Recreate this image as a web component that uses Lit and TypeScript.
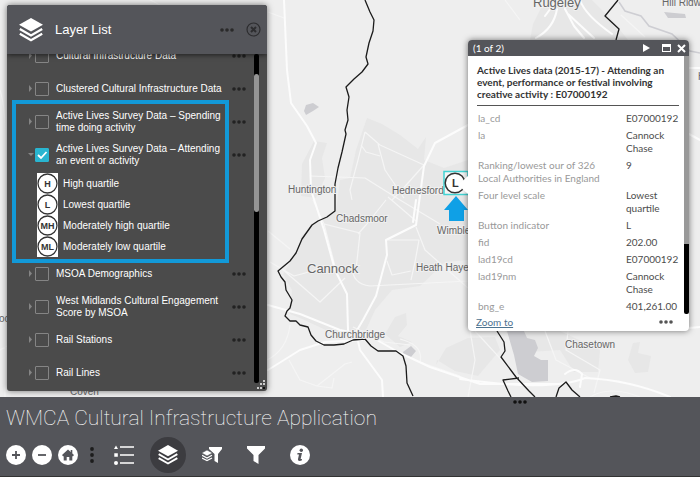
import { LitElement, html, svg, css } from "lit";
import { customElement, property } from "lit/decorators.js";

const dots = () => svg`<svg class="dots" viewBox="0 0 14 4" width="14" height="4" fill="currentColor">
  <circle cx="2" cy="2" r="1.8"/><circle cx="7" cy="2" r="1.8"/><circle cx="12" cy="2" r="1.8"/></svg>`;

const stack = (size: number) => html`<svg viewBox="0 0 24 24" width=${size} height=${size}>
  <path fill="#fff" d="M12 0 24 6.8 12 13.6 0 6.8Z"/>
  <path fill="none" stroke="#fff" stroke-width="2.3" d="M.8 11 12 17.4 23.2 11M.8 15.8 12 22.2 23.2 15.8"/></svg>`;

@customElement("map-view")
export class MapView extends LitElement {
  static styles = css`
    :host { display: block; position: absolute; inset: 0; background: #eeeeee; }
    svg { display: block; width: 100%; height: 100%; }
    text { font-family: "Liberation Sans", Arial, sans-serif; fill: #666; font-size: 10px;
      paint-order: stroke; stroke: #f0f0f0; stroke-width: 2px; }
    .town { font-size: 13px; }
    .tag { font-size: 11px; font-weight: bold; fill: #333; stroke: none; }
    .urban { fill: #e7e7e7; }
    .water { fill: #cdcdd1; }
    .road { fill: none; stroke: #fcfcfc; stroke-width: 2; stroke-linejoin: round; stroke-linecap: round; }
    .lane { fill: none; stroke: #f5f5f5; stroke-width: 1.2; stroke-linejoin: round; }
    .edge { fill: none; stroke: #1b1b1b; stroke-width: 1.3; stroke-linejoin: round; }
  `;
  render() {
    return html`<svg viewBox="0 0 700 397" preserveAspectRatio="xMidYMid slice" role="img" aria-label="Map">
      <path class="urban" d="M367 118 382 124 400 135 418 149 426 137 424 160 444 168 468 160 468 260 445 262 420 286 392 290 375 310 366 330 330 332 300 318 290 314 292 290 283 274 296 254 301 237 313 223 336 210 340 180 350 178 356 150Z"/>
      <path class="urban" d="M314 141 327 143 322 158 325 178 316 198 301 196 302 164ZM533 24 545 0H592L612 20 628 40H530ZM436 365 446 348 468 338 495 337 500 350 478 376 455 371 437 360ZM505 331H560L600 350 598 372 574 372 560 350 530 352ZM395 317 406 313 407 325 398 336 412 342 400 347 385 334ZM633 343 640 342 638 353 651 356 648 372 635 373 628 360Z"/>
      <path class="water" d="M304 111 306 105 313 103 319 107 313 111 306 115ZM403 352 411 346 416 351 411 357 404 356ZM507 331H524L527 338 535 340 538 348 534 356 541 360H548V381L532 382 518 374 514 355ZM664 12 685 14 686 18 668 18Z"/>
      <path class="lane" d="M0 90Q5 105 5 130V397M0 350 7 346M150 0 160 5M268 12 284 18M310 176 365 178 400 200 440 224M365 132 358 160 350 190 352 200M365 132 380 145 424 165M378 144 385 170 404 198M424 165 400 192 392 200M361 145 366 152 380 156M313 200 324 224 360 233 356 270M324 224 337 274M268 231 290 249M270 262 294 276 335 265M281 268 320 302 345 278M352 266Q352 284 370 286L468 281M386 200 366 225 358 234M388 197 416 221M388 240 419 240 415 262 411 280M387 261 392 275 411 271M416 227 425 250 468 288M289 360 300 380 317 386 345 364 352 362M317 386 332 388 334 378M267 360Q287 350 290 325M353 327 384 342 410 345M400 339Q424 345 420 362L460 376M470 330 475 360 468 397M475 331 520 380M545 331 556 360 590 378M568 331 566 350 600 370 594 393M590 397Q610 385 640 397M621 15 645 37M505 0 520 20"/>
      <path class="road" d="M284 0 287 70 291 103 307 126 316 143 310 160 311 190 324 230 335 270 347 294 348 330M468 125 435 143 424 166 416 225 386 240 387 255 376 296 363 320 356 332 360 350 382 380 383 397M416 200 413 222M268 305 300 314 340 330 370 336 398 352 430 367 480 384H560M268 370 300 350 325 342 362 340M545 16 557 0M536 38Q554 28 557 9M565 9 574 26 584 38M568 14 594 38M580 0Q585 15 612 34M460 379Q550 392 585 378Q630 380 670 397M565 374Q575 366 582 374L580 387M689 68 700 68M689 134 700 140M689 328 700 327"/>
      <path fill="none" stroke="#ceced3" stroke-width="1.5" d="M619 2 625 11 641 16 649 26 672 34 690 51 700 53"/>
      <path class="edge" d="M365 0 370 12 374 20 373 31 369 43 366 57 368 64 362 72 354 79 346 87 349 97 347 110 348 120 345 130 346 134 342 152 338 168 335 184 335 211 327 217 318 221 312 225 302 239 296 253 290 261 278 271 281 277 285 282 286 290 292 300 290 308 287 311 285 316 290 321 296 321 300 325 308 327 311 335 316 341 324 345 334 345 344 344 353 340 365 339 371 346 378 351 396 351 403 356 406 366 407 383 413 396M618 0 605 16 619 29 616 40M497 331 504 342 505 351 501 357 516 377 529 391 535 397M519 378 503 380 508 391 511 397M556 397 559 388 566 382 572 390 580 397M610 397 616 396 620 397"/>
      <text class="town" x="533" y="7">Rugeley</text>
      <text x="662" y="6">Hill Ridware</text>
      <text x="698" y="80">H</text>
      <text x="288" y="193">Huntington</text>
      <text x="392" y="194">Hednesford</text>
      <text x="336" y="222">Chadsmoor</text>
      <text class="town" x="307" y="273">Cannock</text>
      <text x="437" y="234">Wimble</text>
      <text x="416" y="271">Heath Haye</text>
      <text x="325" y="338">Churchbridge</text>
      <text x="565" y="348">Chasetown</text>
      <text x="70" y="395">Coven</text>
      <text x="-1" y="322">oc</text>
      <rect x="444" y="171.500" width="24" height="23" fill="#f6f6f6" stroke="#42d3d3" stroke-width="1.500"/>
      <circle cx="455" cy="183" r="9.800" fill="#fff" stroke="#333" stroke-width="1.500"/>
      <text class="tag" x="452" y="187">L</text>
      <path fill="#0fa0e6" d="M456 196 468 210H464V221H449V210H444Z"/>
    </svg>`;
  }
}

@customElement("layer-row")
export class LayerRow extends LitElement {
  @property() label = "";
  @property({ type: Boolean }) on = false;
  static styles = css`
    :host { display: flex; align-items: center; height: 33px; flex: none; padding: 0 21px; }
    .twist { width: 7px; height: 12px; padding: 0; border: 0; background: none; display: flex; align-items: center; }
    label { flex: 1; display: flex; align-items: center; gap: 7px; font-size: 10px; line-height: 12px; color: #fff; }
    input { appearance: none; box-sizing: border-box; flex: none; width: 14px; height: 14px; margin: 0; border: 1px solid #858585; border-radius: 1px; }
    input:checked { border-color: #29b5d0; background: #29b5d0; }
    .box { display: grid; flex: none; }
    .box > * { grid-area: 1 / 1; }
    .tick { pointer-events: none; }
    .more { border: 0; background: none; padding: 0; color: #222; display: flex; width: 14px; }
    .name { width: 168px; }
  `;
  render() {
    return html`<button class="twist" aria-label="Expand">
        <svg width="7" height="7" viewBox="0 0 7 7"><path fill="#858585" d=${this.on ? "M0 2H6L3 5Z" : "M1 0 4 3.500 1 7Z"}/></svg>
      </button>
      <label><span class="box"><input type="checkbox" .checked=${this.on}>
        ${this.on ? html`<svg class="tick" width="14" height="14" viewBox="0 0 14 14"><path fill="none" stroke="#fff" stroke-width="1.800" d="M3 7 6 10 11.500 4"/></svg>` : ""}
        </span><span class="name">${this.label}</span></label>
      <button class="more" aria-label="Layer options">${dots()}</button>`;
  }
}

@customElement("layer-panel")
export class LayerPanel extends LitElement {
  static styles = css`
    :host { position: absolute; left: 7px; top: 5px; bottom: 6px; width: 260px; display: flex; flex-direction: column;
      background: #4b4b4b; border-radius: 3px; box-shadow: 0 0 6px #0008; overflow: hidden; color: #fff; }
    header { height: 49px; flex: none; box-sizing: border-box; display: flex; align-items: center; padding: 0 6px 0 12px;
      background: #54555a; box-shadow: 0 1px 5px #0009; z-index: 1; }
    h2 { margin: 0 0 0 12px; flex: 1; font-size: 13px; font-weight: normal; line-height: 16px; }
    button { border: 0; background: none; padding: 0; color: #2a2a2a; display: flex; }
    .close { margin-left: 12px; }
    .body { flex: 1; min-height: 0; display: flex; flex-direction: column; justify-content: flex-end; padding-bottom: 2px; overflow: hidden; }
    .legend { margin: 0; padding: 2px 0 0 30px; list-style: none; font-size: 10px; line-height: 21px; flex: none; }
    .legend li { display: flex; gap: 5px; height: 21px; }
    .mark { width: 21px; background: #fff; }
    .mark text { font: bold 9px "Liberation Sans", Arial, sans-serif; fill: #333; text-anchor: middle; }
    .frame { position: absolute; left: 5px; top: 95px; width: 217px; height: 163px; box-sizing: border-box; border: 4px solid #1299d8; pointer-events: none; }
    .track { position: absolute; right: 8px; top: 49px; bottom: 8px; width: 5px; border-radius: 2px; background: #000; display: flex; flex-direction: column; }
    .thumb { margin-top: 20px; height: 138px; border-radius: 3px; background: #959595; }
    .grip { position: absolute; right: 1px; bottom: 1px; }
  `;
  render() {
    const mark = (t: string, label: string) => html`<li><svg class="mark" width="21" height="21" viewBox="0 0 21 21">
      <circle cx="10.500" cy="10.500" r="9.500" fill="#fff" stroke="#333" stroke-width="1.300"/><text x="10.500" y="14">${t}</text></svg>${label}</li>`;
    return html`<header>${stack(24)}<h2>Layer List</h2>
        <button aria-label="More">${dots()}</button>
        <button class="close" aria-label="Close"><svg width="15" height="15" viewBox="0 0 15 15" fill="none" stroke="#2d2d2f">
          <circle cx="7.500" cy="7.500" r="6.500" stroke-width="1.200"/><path stroke-width="2" d="M5 5 10 10M10 5 5 10"/></svg></button>
      </header>
      <div class="body">
        <layer-row label="Cultural Infrastructure Data"></layer-row>
        <layer-row label="Clustered Cultural Infrastructure Data"></layer-row>
        <layer-row label="Active Lives Survey Data – Spending time doing activity"></layer-row>
        <layer-row label="Active Lives Survey Data – Attending an event or activity" on></layer-row>
        <ul class="legend">${mark("H", "High quartile")}${mark("L", "Lowest quartile")}${mark("MH", "Moderately high quartile")}${mark("ML", "Moderately low quartile")}</ul>
        <layer-row label="MSOA Demographics"></layer-row>
        <layer-row label="West Midlands Cultural Engagement Score by MSOA"></layer-row>
        <layer-row label="Rail Stations"></layer-row>
        <layer-row label="Rail Lines"></layer-row>
      </div>
      <div class="track"><div class="thumb"></div></div>
      <div class="frame"></div>
      <svg class="grip" width="10" height="10" viewBox="0 0 10 10" fill="#ccc"><path d="M7 0h2v2h-2zM4 3h2v2h-2zM7 3h2v2h-2zM1 7h2v2h-2zM4 7h2v2h-2z"/><path fill="#111" d="M7 7h2v2h-2z"/></svg>`;
  }
}

@customElement("feature-popup")
export class FeaturePopup extends LitElement {
  static styles = css`
    :host { position: absolute; right: 11px; top: 40px; width: 221px; border-radius: 4px; background: #fff;
      box-shadow: 0 0 6px #0008; font-family: Lato, sans-serif; font-size: 10px; color: #4c4c4c; }
    header { display: flex; align-items: center; gap: 5px; height: 16px; padding: 0 3px 0 5px; border-radius: 4px 4px 0 0; background: #54555a; color: #fff; }
    header span { flex: 1; }
    button { border: 0; background: none; padding: 0; display: flex; color: #555; }
    .next { margin-right: 6px; }
    .main { position: relative; height: 258px; overflow: hidden; padding: 8px 10px 0 9px; box-sizing: border-box; }
    h3 { margin: 0; padding-bottom: 5px; font-size: 10px; line-height: 12px; color: #333; border-bottom: 1px solid #555; }
    table { width: 100%; border-collapse: collapse; margin-top: 4px; line-height: 13px; }
    th { font-weight: normal; text-align: left; color: #999; padding: 2px 0 2px 1px; vertical-align: top; }
    td { width: 53px; padding: 2px 0; vertical-align: top; }
    .label { display: block; width: 130px; }
    .track { position: absolute; right: 0; top: 0; bottom: 0; width: 5px; background: #000; border-radius: 0 0 2px 2px; }
    .thumb { height: 188px; background: #999; }
    footer { height: 17px; display: flex; align-items: center; justify-content: space-between; padding: 0 16px 2px 8px; box-sizing: border-box; }
    a { color: #4d7390; }
    .tip { position: absolute; left: -10px; top: 136px; }
  `;
  render() {
    const rows = [["la_cd", "E07000192"], ["la", "Cannock Chase"], ["Ranking/lowest our of 326 Local Authorities in England", "9"],
      ["Four level scale", "Lowest quartile"], ["Button indicator", "L"], ["fid", "202.00"], ["lad19cd", "E07000192"],
      ["lad19nm", "Cannock Chase"], ["bng_e", "401,261.00"]];
    return html`<svg class="tip" width="10" height="18" viewBox="0 0 10 18"><path fill="#fff" d="M10 0V18L0 9Z"/></svg>
      <header><span>(1 of 2)</span>
        <button class="next" aria-label="Next"><svg width="7" height="8" viewBox="0 0 7 8"><path fill="#fff" d="M0 0 7 4 0 8Z"/></svg></button>
        <button aria-label="Maximize"><svg width="11" height="10" viewBox="0 0 11 10"><path fill="#fff" d="M1 1h9v8h-9zM2 4v4h7V4z" fill-rule="evenodd"/></svg></button>
        <button aria-label="Close"><svg width="9" height="9" viewBox="0 0 9 9"><path stroke="#fff" stroke-width="2" d="M1 1 8 8M8 1 1 8"/></svg></button>
      </header>
      <div class="main">
        <h3>Active Lives data (2015-17) - Attending an event, performance or festival involving creative activity : E07000192</h3>
        <table>${rows.map(([k, v]) => html`<tr><th scope="row"><span class="label">${k}</span></th><td>${v}</td></tr>`)}</table>
        <div class="track"><div class="thumb"></div></div>
      </div>
      <footer><a href="#">Zoom to</a><button aria-label="More">${dots()}</button></footer>`;
  }
}

@customElement("app-root")
export class AppRoot extends LitElement {
  static styles = css`
    :host { display: flex; flex-direction: column; min-height: 100vh; font-family: "Liberation Sans", Arial, sans-serif; }
    .stage { position: relative; flex: 1; overflow: hidden; }
    footer { position: relative; height: 80px; box-sizing: border-box; background: #54555a; border-bottom: 1px solid #333; padding: 8px 6px 0; }
    h1 { margin: 0; font-family: Roboto, sans-serif; font-weight: 100; font-size: 21px; line-height: 26px; color: #fff; white-space: nowrap; }
    nav, .widgets { display: flex; align-items: center; }
    nav { gap: 6px; padding-top: 6px; }
    .widgets { gap: 8px; }
    button { border: 0; padding: 0; background: none; display: flex; align-items: center; justify-content: center; }
    .round { width: 20px; height: 20px; border-radius: 50%; background: #fff; }
    .sep { width: 16px; }
    .widget { width: 36px; height: 36px; border-radius: 50%; }
    .active { background: #3c3c40; }
    .pull { position: absolute; left: 513px; top: 3px; color: #111; }
  `;
  render() {
    return html`<main class="stage"><map-view></map-view><layer-panel></layer-panel><feature-popup></feature-popup></main>
      <footer>
        <button class="pull" aria-label="Attribute table">${dots()}</button>
        <h1>WMCA Cultural Infrastructure Application</h1>
        <nav>
          <button class="round" aria-label="Zoom in"><svg width="10" height="10" viewBox="0 0 10 10"><path stroke="#54555a" stroke-width="1.800" d="M1 5H9M5 1V9"/></svg></button>
          <button class="round" aria-label="Zoom out"><svg width="10" height="10" viewBox="0 0 10 10"><path stroke="#54555a" stroke-width="1.800" d="M1 5H9"/></svg></button>
          <button class="round" aria-label="Home"><svg width="12" height="12" viewBox="0 0 12 12" fill="#54555a"><path d="M6 .5 12 6 11 7.200H10.300V11.500H7.300V8H4.700V11.500H1.700V7.200H1L0 6Z"/><path d="M8.700 1H10.300V4.500H8.700Z"/></svg></button>
          <svg class="sep" width="16" height="16" viewBox="0 0 16 16" fill="#1c1c1c"><circle cx="8" cy="2" r="1.900"/><circle cx="8" cy="8" r="1.900"/><circle cx="8" cy="14" r="1.900"/></svg>
          <div class="widgets">
            <button class="widget" aria-label="Legend"><svg width="20" height="20" viewBox="0 0 20 20" fill="#fff"><path d="M2 .5 4 4H0ZM.3 8.200h3.500v3.500H.3zM6 1.300h14v1.500H6zM6 9.200h14v1.500H6zM6 17.200h14v1.500H6z"/><circle cx="2" cy="18" r="2"/></svg></button>
            <button class="widget active" aria-label="Layer list">${stack(20)}</button>
            <button class="widget" aria-label="Group filter"><svg width="20" height="18" viewBox="0 0 20 18"><path fill="#fff" d="M7 1H20V3L16 8V17L12.500 15V8L7 3Z"/><path fill="#fff" stroke="#54555a" stroke-width=".6" d="M5 4 10.500 7 5 10-.3 7Z"/><path fill="none" stroke="#fff" stroke-width="1.200" d="M0 9.300 5 12 10 9.300M0 12 5 14.500 10 12"/></svg></button>
            <button class="widget" aria-label="Filter"><svg width="18" height="18" viewBox="0 0 18 18"><path fill="#fff" d="M0 0H18V2.500L11.500 9V18L6.500 15V9L0 2.500Z"/></svg></button>
            <button class="widget" aria-label="About"><svg width="20" height="20" viewBox="0 0 20 20"><circle cx="10" cy="10" r="10" fill="#fff"/><path fill="#54555a" d="M7.500 8H12L10.600 14H12L11.700 15.500C10 16.300 7.500 16.300 8 14L9 9.400H7.300Z"/><circle cx="11.300" cy="5.200" r="1.700" fill="#54555a"/></svg></button>
          </div>
        </nav>
      </footer>`;
  }
}
